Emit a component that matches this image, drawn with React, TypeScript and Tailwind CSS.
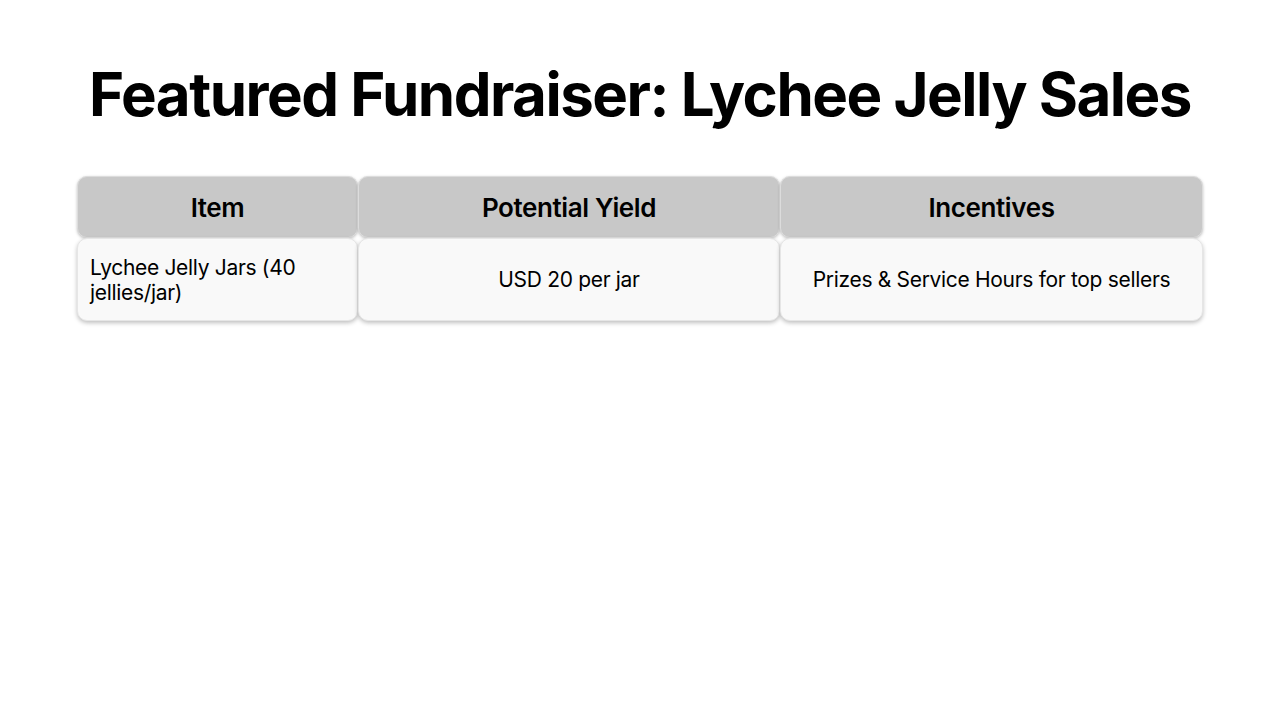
import React from "react";

const font = { fontFamily: "Inter, 'Noto Sans', sans-serif" };

export default function App() {
  const head = ["Item", "Potential Yield", "Incentives"];
  return (
    <div className="w-[1280px] h-[720px] bg-white flex flex-col items-center" style={font}>
      <h1 className="mt-[58px] text-[60px] leading-[72px] font-bold tracking-[-0.025em] text-black">
        Featured Fundraiser: Lychee Jelly Sales
      </h1>
      <div className="mt-[46px] grid grid-cols-[281px_422px_423px] grid-rows-[62px_83px]">
        {head.map((h) => (
          <div
            key={h}
            className="bg-[#c8c8c8] rounded-[10px] border border-[#dcdcdc] shadow-[0_1px_3px_rgba(0,0,0,0.25)] flex items-center justify-center text-[26px] font-semibold tracking-[-0.015em] text-black"
          >
            {h}
          </div>
        ))}
        <div className="bg-[#f9f9f9] rounded-[10px] border border-[#e6e6e6] shadow-[0_2px_4px_rgba(0,0,0,0.25)] flex items-center px-[12px] text-[21px] leading-[25px] tracking-[-0.015em] text-black">
          Lychee Jelly Jars (40 jellies/jar)
        </div>
        <div className="bg-[#f9f9f9] rounded-[10px] border border-[#e6e6e6] shadow-[0_2px_4px_rgba(0,0,0,0.25)] flex items-center justify-center text-[21px] leading-[25px] tracking-[-0.015em] text-black">
          USD 20 per jar
        </div>
        <div className="bg-[#f9f9f9] rounded-[10px] border border-[#e6e6e6] shadow-[0_2px_4px_rgba(0,0,0,0.25)] flex items-center justify-center text-[21px] leading-[25px] tracking-[-0.015em] text-black">
          Prizes &amp; Service Hours for top sellers
        </div>
      </div>
    </div>
  );
}
